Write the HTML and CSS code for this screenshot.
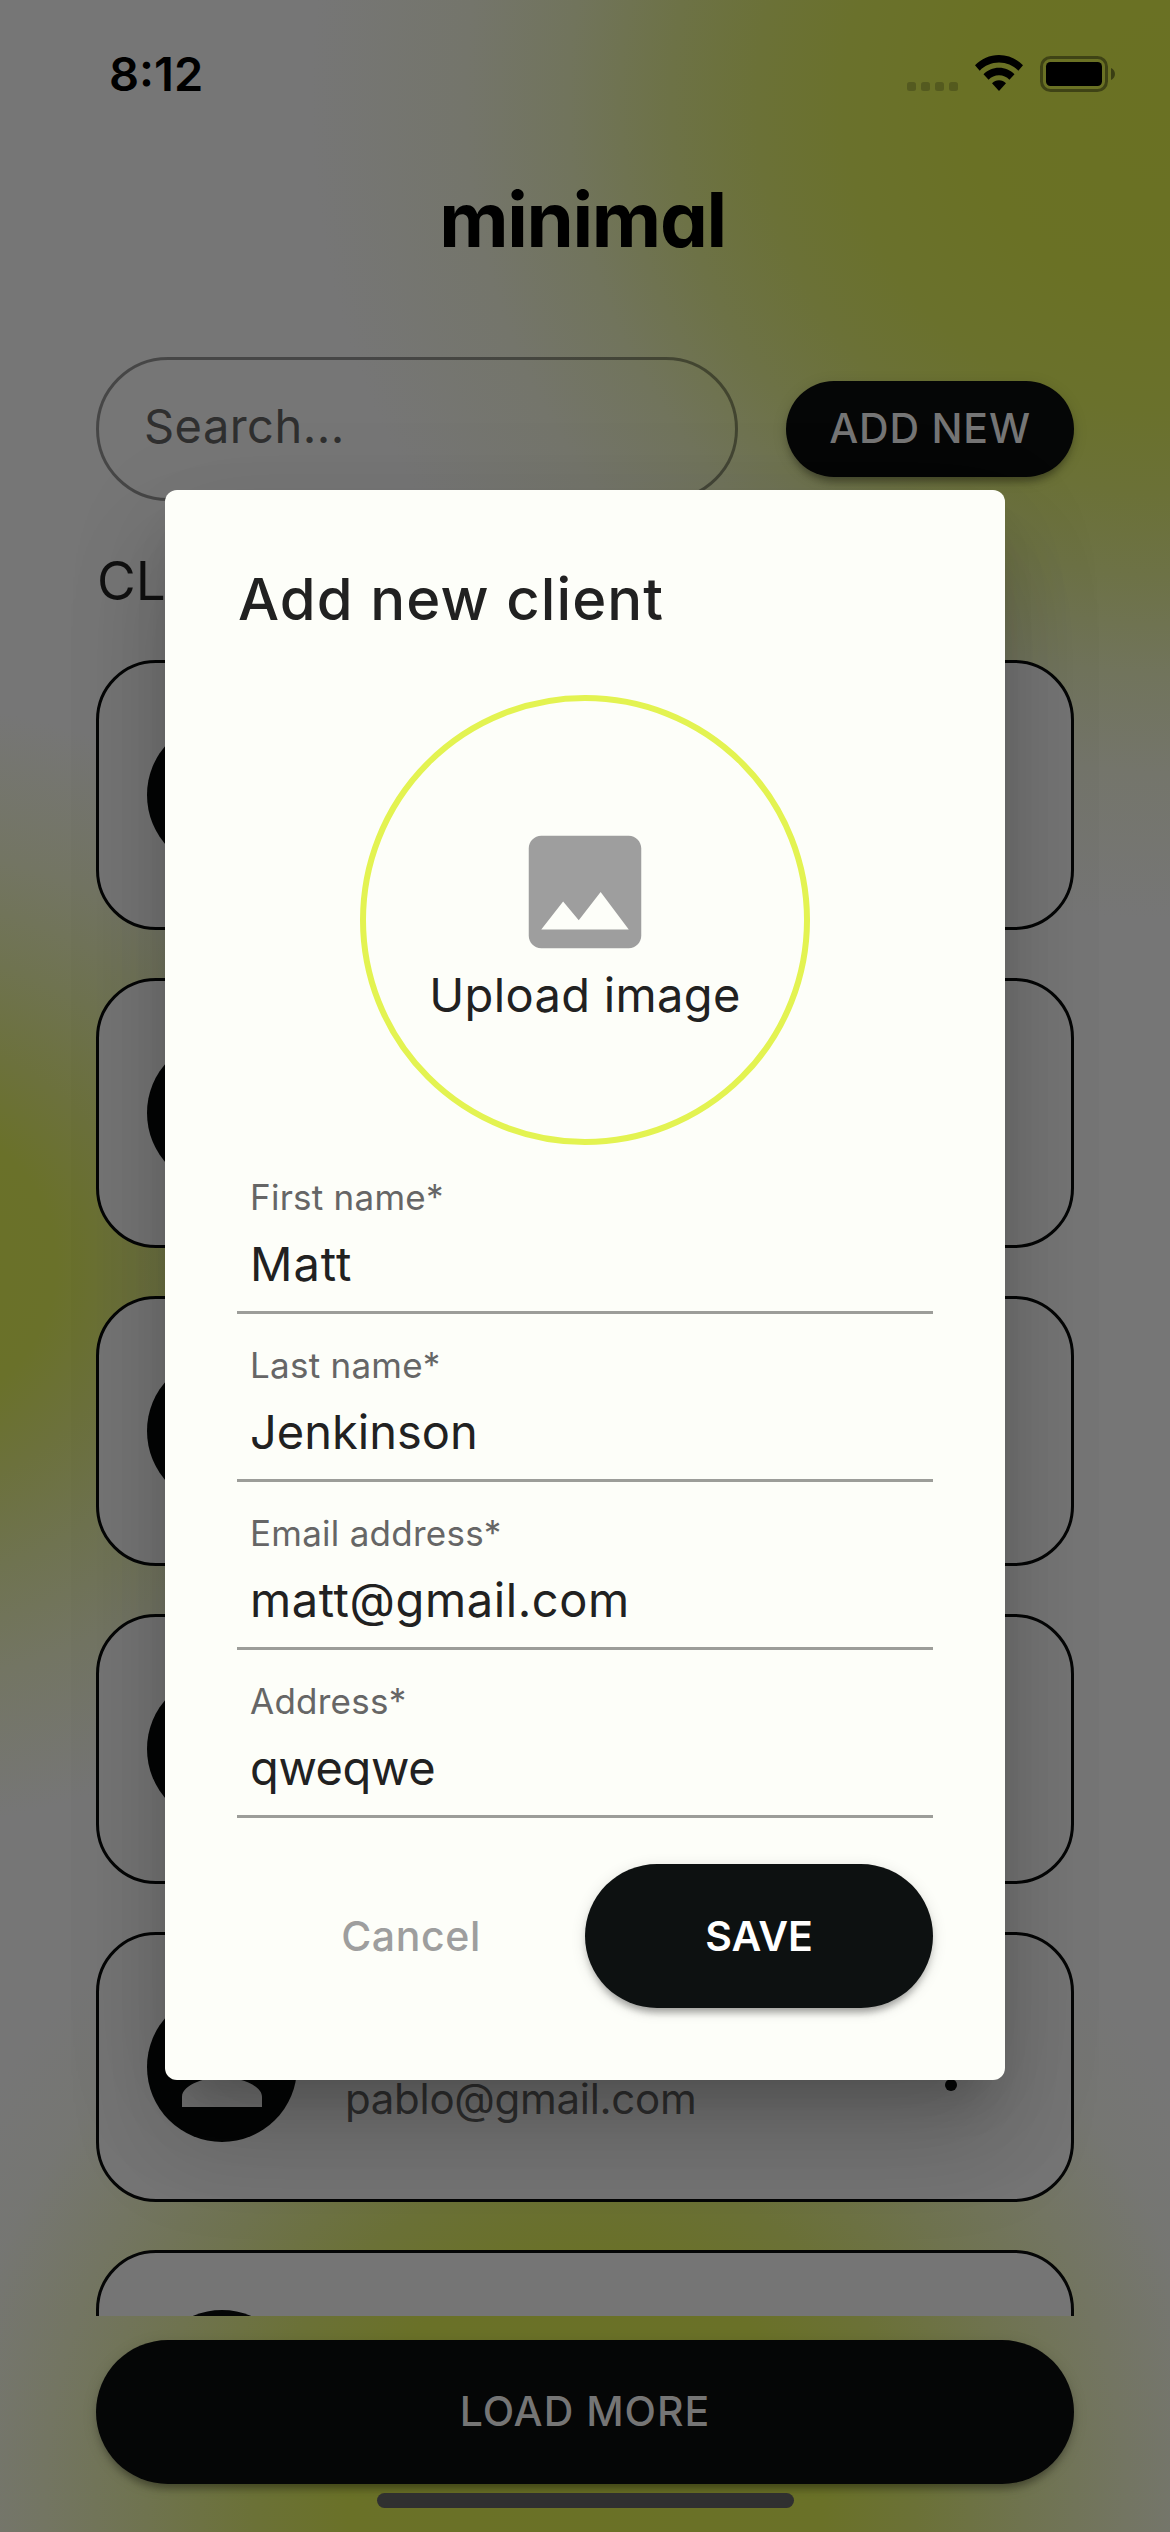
FILE: index.html
```html
<!DOCTYPE html>
<html lang="en">
<head>
<meta charset="utf-8">
<title>minimal</title>
<link rel="stylesheet" href="styles.css">
</head>
<body>
<div class="screen">
  <header class="status">
    <span class="time">8:12</span>
    <div class="status-icons">
      <svg class="cell" viewBox="0 0 51 9"><rect width="9" height="9" rx="2.5"/><rect x="14" width="9" height="9" rx="2.5"/><rect x="28" width="9" height="9" rx="2.5"/><rect x="42" width="9" height="9" rx="2.5"/></svg>
      <svg class="wifi" viewBox="0 0 48 36"><path d="M24 0C14.7 0 6.300 3.700 0 10.300L4.700 15.700C9.700 10.500 16.500 7.500 24 7.500S38.300 10.500 43.300 15.700L48 10.300C41.700 3.700 33.300 0 24 0Z"/><path d="M24 12.800C17.900 12.800 12.500 15.300 8.500 19.300L13.600 24.700C16.300 22 19.900 20.300 24 20.300S31.700 22 34.400 24.700L39.500 19.300C35.500 15.300 30.100 12.800 24 12.800Z"/><path d="M24 25.200C21.300 25.200 18.800 26.300 17 28.200L24 36L31 28.200C29.200 26.300 26.700 25.200 24 25.200Z"/></svg>
      <svg class="battery" viewBox="0 0 75 36"><rect x="1.500" y="1.500" width="65" height="33" rx="9" fill="none" stroke="#000" stroke-opacity=".4" stroke-width="3"/><rect x="6" y="6" width="56" height="24" rx="4.500"/><path d="M71 12C73.500 13.200 75 15.400 75 18S73.500 22.800 71 24Z" fill-opacity=".45"/></svg>
    </div>
  </header>
  <h1 class="logo">minimal</h1>
  <div class="toolbar">
    <div class="search">Search...</div>
    <button class="btn add">ADD NEW</button>
  </div>
  <h2 class="section">CL</h2>
  <main class="list">
    <article class="card"><div class="avatar"></div></article>
    <article class="card"><div class="avatar"></div></article>
    <article class="card"><div class="avatar"></div></article>
    <article class="card"><div class="avatar"></div></article>
    <article class="card">
      <div class="avatar"><svg viewBox="0 0 24 24"><path d="M12 12c2.210 0 4-1.790 4-4s-1.790-4-4-4-4 1.790-4 4 1.790 4 4 4zm0 2c-2.670 0-8 1.340-8 4v2h16v-2c0-2.660-5.330-4-8-4z"/></svg></div>
      <div class="email">pablo@gmail.com</div>
      <svg class="more" viewBox="0 0 24 24"><circle cx="12" cy="6" r="2"/><circle cx="12" cy="12" r="2"/><circle cx="12" cy="18" r="2"/></svg>
    </article>
    <article class="card"><div class="avatar"></div></article>
  </main>
  <footer class="footer">
    <button class="btn load">LOAD MORE</button>
    <div class="home-bar"></div>
  </footer>
</div>

<div class="overlay">
  <section class="dialog">
    <h3 class="title">Add new client</h3>
    <div class="upload">
      <svg viewBox="0 0 24 24"><path d="M21 19V5c0-1.100-.9-2-2-2H5c-1.100 0-2 .9-2 2v14c0 1.100.9 2 2 2h14c1.100 0 2-.9 2-2zM8.500 13.500l2.500 3.010L14.500 12l4.500 6H5l3.500-4.500z"/></svg>
      <span>Upload image</span>
    </div>
    <div class="field first"><label>First name*</label><p>Matt</p></div>
    <div class="field last"><label>Last name*</label><p>Jenkinson</p></div>
    <div class="field mail"><label>Email address*</label><p>matt@gmail.com</p></div>
    <div class="field address"><label>Address*</label><p>qweqwe</p></div>
    <div class="actions">
      <button class="cancel">Cancel</button>
      <button class="btn save">SAVE</button>
    </div>
  </section>
</div>
</body>
</html>
```
FILE: styles.css
```css
* { box-sizing: border-box; margin: 0; padding: 0; }

body {
  width: 1170px;
  height: 2532px;
  overflow: hidden;
  font-family: Inter, "Liberation Sans", sans-serif;
  color: #111;
}

button { border: 0; background: none; font: inherit; }

.screen {
  display: flex;
  flex-direction: column;
  height: 2532px;
  padding: 0 96px;
  background:
    radial-gradient(ellipse 860px 820px at 1170px 100px, #6a7123 0, #6a7125 24%, #6a712c 38%, #6b7137 48%, #6d7246 58%, #71745c 70%, #74756b 82%, rgba(118,118,118,0) 100%),
    radial-gradient(circle 560px at -90px 1265px, #6a7127 0, #6a712a 26%, #6c713c 40%, #6f7350 56%, #737563 74%, rgba(118,118,118,0) 100%),
    radial-gradient(circle 720px at 585px 2500px, #6a7126 0, #6a7128 33%, #6b7137 46%, #6f734f 61%, #737562 75%, rgba(117,118,112,.6) 88%, rgba(118,118,118,0) 100%),
    #767676;
}

.status {
  display: flex;
  justify-content: space-between;
  align-items: flex-start;
  height: 170px;
  padding: 0 0 0 13px;
  margin-right: -41px;
}
.time { font-size: 47px; font-weight: 600; line-height: 60px; margin-top: 44px; color: #000; }
.status-icons { display: flex; align-items: flex-end; height: 92px; }
.cell { width: 51px; height: 9px; margin: 0 17px 1px 0; fill: rgba(0,0,0,.2); }
.wifi { width: 48px; height: 36px; margin-right: 17px; margin-bottom: 1px; }
.battery { width: 75px; height: 36px; }

.logo {
  height: 187px;
  padding-right: 5px;
  text-align: center;
  font-size: 76px;
  line-height: 98px;
  letter-spacing: -1.3px;
  font-weight: 700;
  font-feature-settings: "cv11";
  color: #000;
}

.toolbar { display: flex; align-items: center; justify-content: space-between; height: 144px; }
.search {
  width: 642px;
  height: 144px;
  padding-left: 45px;
  border: 3px solid rgba(0,0,0,.4);
  border-radius: 72px;
  font-size: 47px;
  line-height: 132px;
  letter-spacing: .45px;
  color: #2f2f2f;
}
.btn {
  padding-bottom: 2px;
  background: #050606;
  color: #757575;
  font-size: 41px;
  font-weight: 500;
  box-shadow: 0 9px 6px -6px rgba(0,0,0,.2), 0 6px 6px rgba(0,0,0,.14), 0 3px 15px rgba(0,0,0,.12);
}
.add { width: 288px; height: 96px; border-radius: 48px; letter-spacing: .8px; }

.section { height: 159px; padding-top: 48px; font-size: 53px; line-height: 64px; font-weight: 400; padding-left: 1px; }

.list { display: flex; flex-direction: column; gap: 48px; height: 1656px; overflow: hidden; }
.card {
  flex: none;
  display: flex;
  align-items: center;
  height: 270px;
  padding: 0 84px 0 48px;
  border: 3px solid #050606;
  border-radius: 60px;
  background: #757575;
}
.avatar {
  display: flex;
  align-items: center;
  justify-content: center;
  width: 150px;
  height: 150px;
  border-radius: 50%;
  background: #050606;
}
.avatar svg { width: 120px; height: 120px; fill: #757575; }
.email { flex: 1; margin-left: 48px; padding-top: 64px; font-size: 42px; line-height: 50px; letter-spacing: -.3px; color: #2f2f2f; }
.more { width: 72px; height: 72px; fill: #050606; }

.footer { display: flex; flex-direction: column; align-items: center; gap: 9px; padding-top: 24px; }
.load { width: 978px; height: 144px; border-radius: 72px; letter-spacing: 1px; }
.home-bar { width: 417px; height: 15px; border-radius: 8px; background: #303030; }

/* Modal layer above the client list */
.overlay {
  position: absolute;
  inset: 0;
  width: 1170px;
  height: 2532px;
  display: flex;
  justify-content: center;
  padding-top: 490px;
}
.dialog {
  display: flex;
  flex-direction: column;
  width: 840px;
  height: 1590px;
  padding: 72px;
  border-radius: 12px;
  background: #fdfef9;
  color: #212121;
  box-shadow: 0 33px 45px -21px rgba(0,0,0,.2), 0 66px 100px 3px rgba(0,0,0,.13), 0 27px 110px 6px rgba(0,0,0,.08);
}
.dialog > * { flex: none; }
.title { height: 133px; padding-left: 1px; font-size: 58px; line-height: 74px; font-weight: 500; letter-spacing: 1.1px; }
.upload {
  align-self: center;
  display: flex;
  flex-direction: column;
  align-items: center;
  justify-content: center;
  width: 450px;
  height: 450px;
  margin-bottom: 1px;
  border: 6px solid #e3f351;
  border-radius: 50%;
}
.upload svg { width: 150px; height: 150px; fill: #9e9e9e; }
.upload span { font-size: 47px; line-height: 56px; letter-spacing: .35px; white-space: nowrap; }

.field { height: 168px; padding: 29px 0 0 13px; border-bottom: 3px solid #9c9d99; }
.field label { display: block; font-size: 35px; line-height: 44px; letter-spacing: .25px; color: #666; }
.field p { margin-top: 16px; font-size: 47px; line-height: 58px; }
.first p { letter-spacing: 1px; }
.mail p { letter-spacing: .6px; }
.address p { letter-spacing: -.4px; }

.actions { display: grid; grid-template-columns: 1fr 1fr; margin-top: 46px; }
.cancel { color: #9e9e9e; font-size: 41px; font-weight: 500; letter-spacing: .6px; }
.save { height: 144px; padding: 0; border-radius: 72px; background: #0d1111; color: #fff; font-weight: 600; }
```
